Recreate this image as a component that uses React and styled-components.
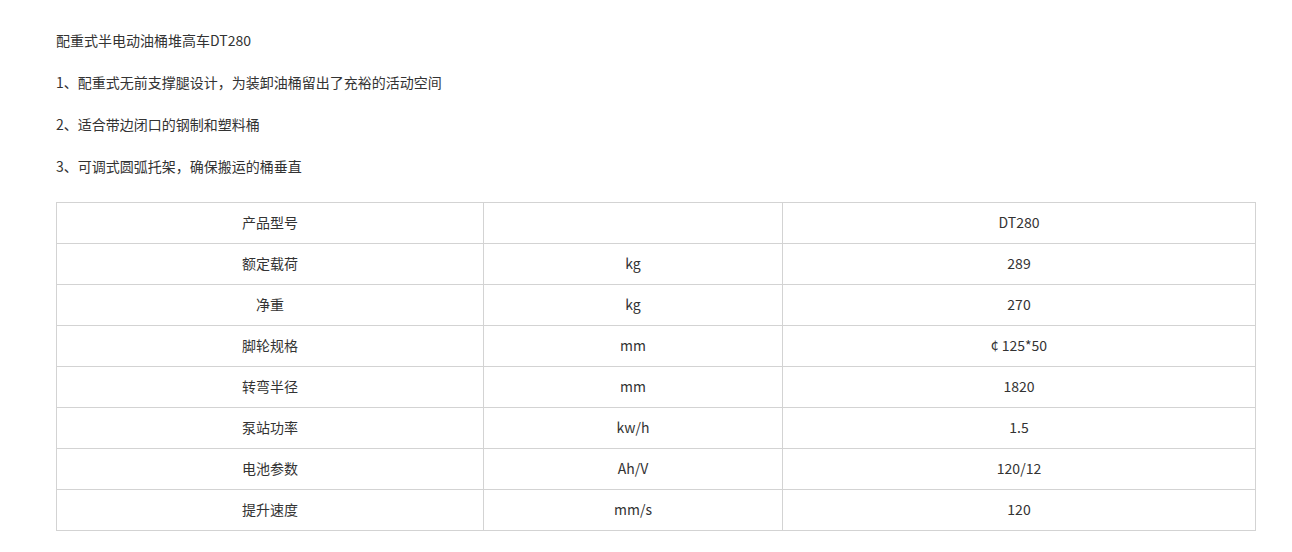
import styled, { createGlobalStyle } from 'styled-components';

const GlobalStyle = createGlobalStyle`
  body {
    margin: 0;
    background: #ffffff;
    font-family: 'Noto Sans CJK SC', 'Noto Sans', sans-serif;
    font-size: 14px;
    color: #333333;
  }
`;

const Page = styled.div`
  padding: 28px 36px 20px 56px;
`;

const Para = styled.p`
  margin: 0 0 18px;
  line-height: 24px;
`;

const SpecTable = styled.table`
  margin-top: 24px;
  width: 1199px;
  table-layout: fixed;
  border-collapse: collapse;

  td {
    height: 38px;
    padding: 0 0 2px;
    line-height: 38px;
    text-align: center;
    border: 1px solid #d3d3d3;
  }
`;

const specs = [
  ['产品型号', '', 'DT280'],
  ['额定载荷', 'kg', '289'],
  ['净重', 'kg', '270'],
  ['脚轮规格', 'mm', '¢ 125*50'],
  ['转弯半径', 'mm', '1820'],
  ['泵站功率', 'kw/h', '1.5'],
  ['电池参数', 'Ah/V', '120/12'],
  ['提升速度', 'mm/s', '120'],
];

export default function App() {
  return (
    <Page>
      <GlobalStyle />
      <Para>配重式半电动油桶堆高车DT280</Para>
      <Para>1、配重式无前支撑腿设计，为装卸油桶留出了充裕的活动空间</Para>
      <Para>2、适合带边闭口的钢制和塑料桶</Para>
      <Para>3、可调式圆弧托架，确保搬运的桶垂直</Para>
      <SpecTable>
        <colgroup>
          <col style={{ width: 427 }} />
          <col style={{ width: 299 }} />
          <col style={{ width: 473 }} />
        </colgroup>
        <tbody>
          {specs.map((row, i) => (
            <tr key={i}>
              {row.map((cell, j) => (
                <td key={j}>{cell}</td>
              ))}
            </tr>
          ))}
        </tbody>
      </SpecTable>
    </Page>
  );
}
